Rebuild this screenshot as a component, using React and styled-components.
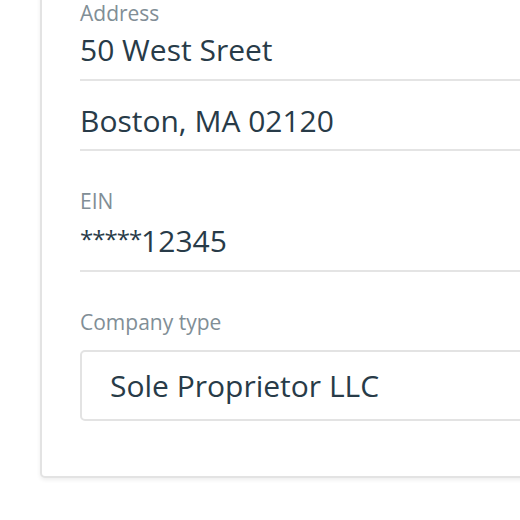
import React from "react";
import styled, { createGlobalStyle } from "styled-components";

const GlobalStyle = createGlobalStyle`
  html, body {
    margin: 0;
    padding: 0;
    background: #ffffff;
    font-family: "Open Sans", "Noto Sans", sans-serif;
  }
`;

const Page = styled.div`
  width: 520px;
  height: 520px;
  overflow: hidden;
  background: #ffffff;
  padding-left: 40px;
  box-sizing: border-box;
`;

const Card = styled.div`
  width: 620px;
  margin-top: -42px;
  padding: 40px 0 55px 38px;
  border: 2px solid #e3e3e3;
  border-radius: 5px;
  box-shadow: 0 2px 4px rgba(0, 0, 0, 0.07);
  background: #ffffff;
  box-sizing: border-box;
`;

const Label = styled.div`
  font-size: 21px;
  line-height: 26px;
  color: #818e96;
  margin-top: ${(props) => props.gap || 0}px;
`;

const Value = styled.div`
  font-size: 30px;
  line-height: 40px;
  color: #283b48;
  margin-top: ${(props) => props.gap || 0}px;
  padding-bottom: ${(props) => props.pad || 10}px;
  border-bottom: 2px solid #e4e4e4;
`;

const Masked = styled.span`
  font-size: 24px;
  letter-spacing: -1px;
  vertical-align: 4px;
`;

const SelectBox = styled.div`
  margin-top: 15px;
  height: 71px;
  display: flex;
  align-items: center;
  padding-left: 28px;
  border: 2px solid #e3e3e3;
  border-radius: 5px;
  box-sizing: border-box;
  font-size: 30px;
  color: #283b48;
`;

export default function App() {
  return (
    <>
      <GlobalStyle />
      <Page>
        <Card>
          <Label>Address</Label>
          <Value gap={4} pad={9}>50 West Sreet</Value>
          <Value gap={20} pad={8}>Boston, MA 02120</Value>
          <Label gap={37}>EIN</Label>
          <Value gap={5} pad={9}>
            <Masked>*****</Masked>12345
          </Value>
          <Label gap={37}>Company type</Label>
          <SelectBox>Sole Proprietor LLC</SelectBox>
        </Card>
      </Page>
    </>
  );
}
